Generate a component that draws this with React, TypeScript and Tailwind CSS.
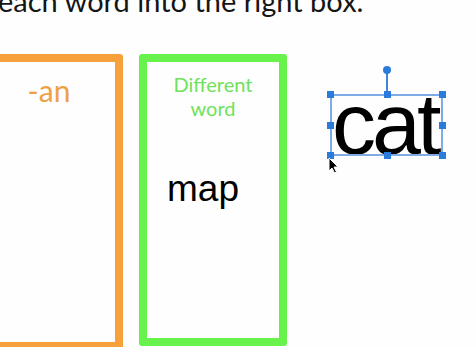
import React from "react";

const Handle = ({ className }: { className: string }) => (
  <div className={`absolute w-[7px] h-[7px] bg-[#2b7bdc] ${className}`} />
);

export default function App() {
  return (
    <div className="relative w-[476px] h-[347px] overflow-hidden bg-[#fefefe] font-['Lato',sans-serif]">
      <h1 className="-mt-[16px] -ml-[2px] text-[29px] leading-[1.2] text-[#151515] font-normal whitespace-nowrap">
        each word into the right box.
      </h1>
      <div className="flex gap-[16px] mt-[35px] -ml-[25px]">
        <div className="w-[148px] h-[296px] border-[8px] border-[#f7a13c] rounded-[3px] flex flex-col items-center pt-[10px]">
          <div className="text-[30px] leading-[1.2] text-[#eea144]">-an</div>
        </div>
        <div className="w-[148px] h-[292px] border-[8px] border-[#68f34c] rounded-[3px] flex flex-col pt-[10px]">
          <div className="text-[20px] leading-[24px] text-[#6ee25a] text-center">
            Different
            <br />
            word
          </div>
          <div className="mt-[50px] pl-[20px] text-[37px] leading-none text-black font-['Liberation_Sans',Arial,sans-serif]">
            map
          </div>
        </div>
      </div>

      {/* dragged word with selection frame */}
      <div className="absolute left-[330px] top-[94px] w-[113px] h-[62px]">
        <div className="absolute left-[2px] top-[-14px] text-[88px] leading-none tracking-[-4px] text-black font-['Liberation_Sans',Arial,sans-serif] whitespace-nowrap">
          cat
        </div>
        <div className="absolute inset-0 border-2 border-[#7eaae6]" />
        <div className="absolute left-[56px] top-[-24px] w-[2px] h-[24px] bg-[#3f86dc]" />
        <div className="absolute left-[53px] top-[-28px] w-[8px] h-[8px] rounded-full bg-[#2b7bdc]" />
        <Handle className="-left-[3px] -top-[3px]" />
        <Handle className="left-[54px] -top-[3px]" />
        <Handle className="-right-[3px] -top-[3px]" />
        <Handle className="-left-[3px] top-[28px]" />
        <Handle className="-right-[3px] top-[28px]" />
        <Handle className="-left-[3px] -bottom-[3px]" />
        <Handle className="left-[54px] -bottom-[3px]" />
        <Handle className="-right-[3px] -bottom-[3px]" />
      </div>

      {/* mouse cursor */}
      <svg className="absolute left-[328px] top-[157px]" width="11" height="17" viewBox="0 0 11 17">
        <path d="M1 1 L1 14 L4 11 L6.5 16 L8.5 15 L6 10 L10 10 Z" fill="#000" stroke="#fff" strokeWidth="1" />
      </svg>
    </div>
  );
}
